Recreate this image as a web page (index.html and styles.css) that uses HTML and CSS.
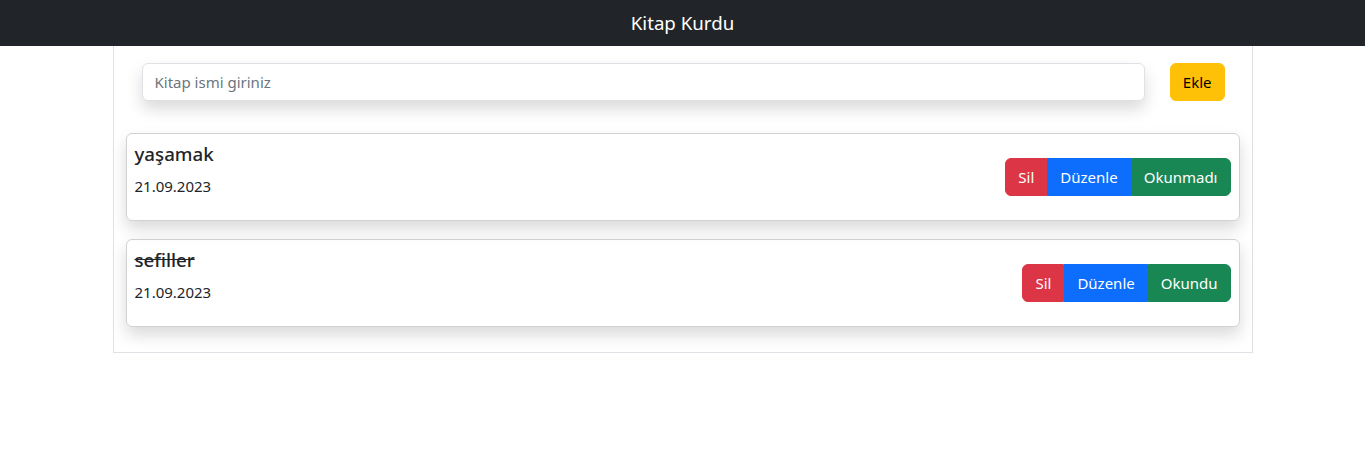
FILE: index.html
```html
<!DOCTYPE html>
<html lang="tr">
<head>
<meta charset="utf-8">
<title>Kitap Kurdu</title>
<link rel="stylesheet" href="styles.css">
</head>
<body>
<nav class="navbar"><span class="brand">Kitap Kurdu</span></nav>
<main class="container">
  <form class="add-form">
    <input class="text-input" type="text" placeholder="Kitap ismi giriniz">
    <button class="btn btn-warning" type="button">Ekle</button>
  </form>
  <div class="book-card">
    <div class="book-info">
      <h5 class="book-title">yaşamak</h5>
      <p class="book-date">21.09.2023</p>
    </div>
    <div class="btn-group">
      <button class="btn btn-danger" type="button">Sil</button>
      <button class="btn btn-primary" type="button">Düzenle</button>
      <button class="btn btn-success" type="button">Okunmadı</button>
    </div>
  </div>
  <div class="book-card">
    <div class="book-info">
      <h5 class="book-title done">sefiller</h5>
      <p class="book-date">21.09.2023</p>
    </div>
    <div class="btn-group">
      <button class="btn btn-danger" type="button">Sil</button>
      <button class="btn btn-primary" type="button">Düzenle</button>
      <button class="btn btn-success" type="button">Okundu</button>
    </div>
  </div>
</main>
</body>
</html>
```

FILE: styles.css
```css
* { box-sizing: border-box; }
html, body { margin: 0; padding: 0; }
body {
  font-family: "Noto Sans", "Open Sans", "Liberation Sans", sans-serif;
  font-size: 15px;
  line-height: 24px;
  color: #212529;
  background: #fff;
}
.navbar {
  background: #212529;
  height: 46px;
  display: flex;
  align-items: center;
  justify-content: center;
}
.brand {
  color: #fff;
  font-size: 18.7px;
  line-height: 30px;
}
.container {
  width: 1140px;
  margin: 0 auto;
  border: 1px solid #dee2e6;
  border-top: 0;
  padding: 17px 12px 25px;
}
.add-form {
  display: flex;
  align-items: center;
  padding: 0 15px 0 16px;
  margin: 0 0 32px;
}
.text-input {
  flex: 1;
  height: 38px;
  padding: 6px 12px;
  font: inherit;
  color: #212529;
  border: 1px solid #dee2e6;
  border-radius: 6px;
  box-shadow: 0 8px 16px rgba(0,0,0,.15);
  outline: none;
}
.text-input::placeholder { color: #6c757d; }
.btn {
  font: inherit;
  line-height: 24px;
  padding: 6px 12px;
  border: 1px solid transparent;
  border-radius: 6px;
  cursor: pointer;
}
.add-form .btn { margin-left: 25px; }
.btn-warning { background: #ffc107; border-color: #ffc107; color: #000; }
.btn-danger { background: #dc3545; border-color: #dc3545; color: #fff; }
.btn-primary { background: #0d6efd; border-color: #0d6efd; color: #fff; }
.btn-success { background: #198754; border-color: #198754; color: #fff; }
.btn-group { display: flex; }
.btn-group .btn { border-radius: 0; }
.btn-group .btn:first-child { border-radius: 6px 0 0 6px; }
.btn-group .btn:last-child { border-radius: 0 6px 6px 0; }
.book-card {
  display: flex;
  align-items: center;
  justify-content: space-between;
  border: 1px solid rgba(0,0,0,.175);
  border-radius: 6px;
  box-shadow: 0 8px 16px rgba(0,0,0,.15);
  padding: 8px 8px 8px;
  margin-bottom: 18px;
}
.book-card:last-child { margin-bottom: 0; }
.book-title {
  margin: 0 0 8px;
  font-size: 18.7px;
  font-weight: 500;
  line-height: 24px;
}
.book-title.done { text-decoration: line-through; }
.book-date { margin: 0 0 14px; }
```
